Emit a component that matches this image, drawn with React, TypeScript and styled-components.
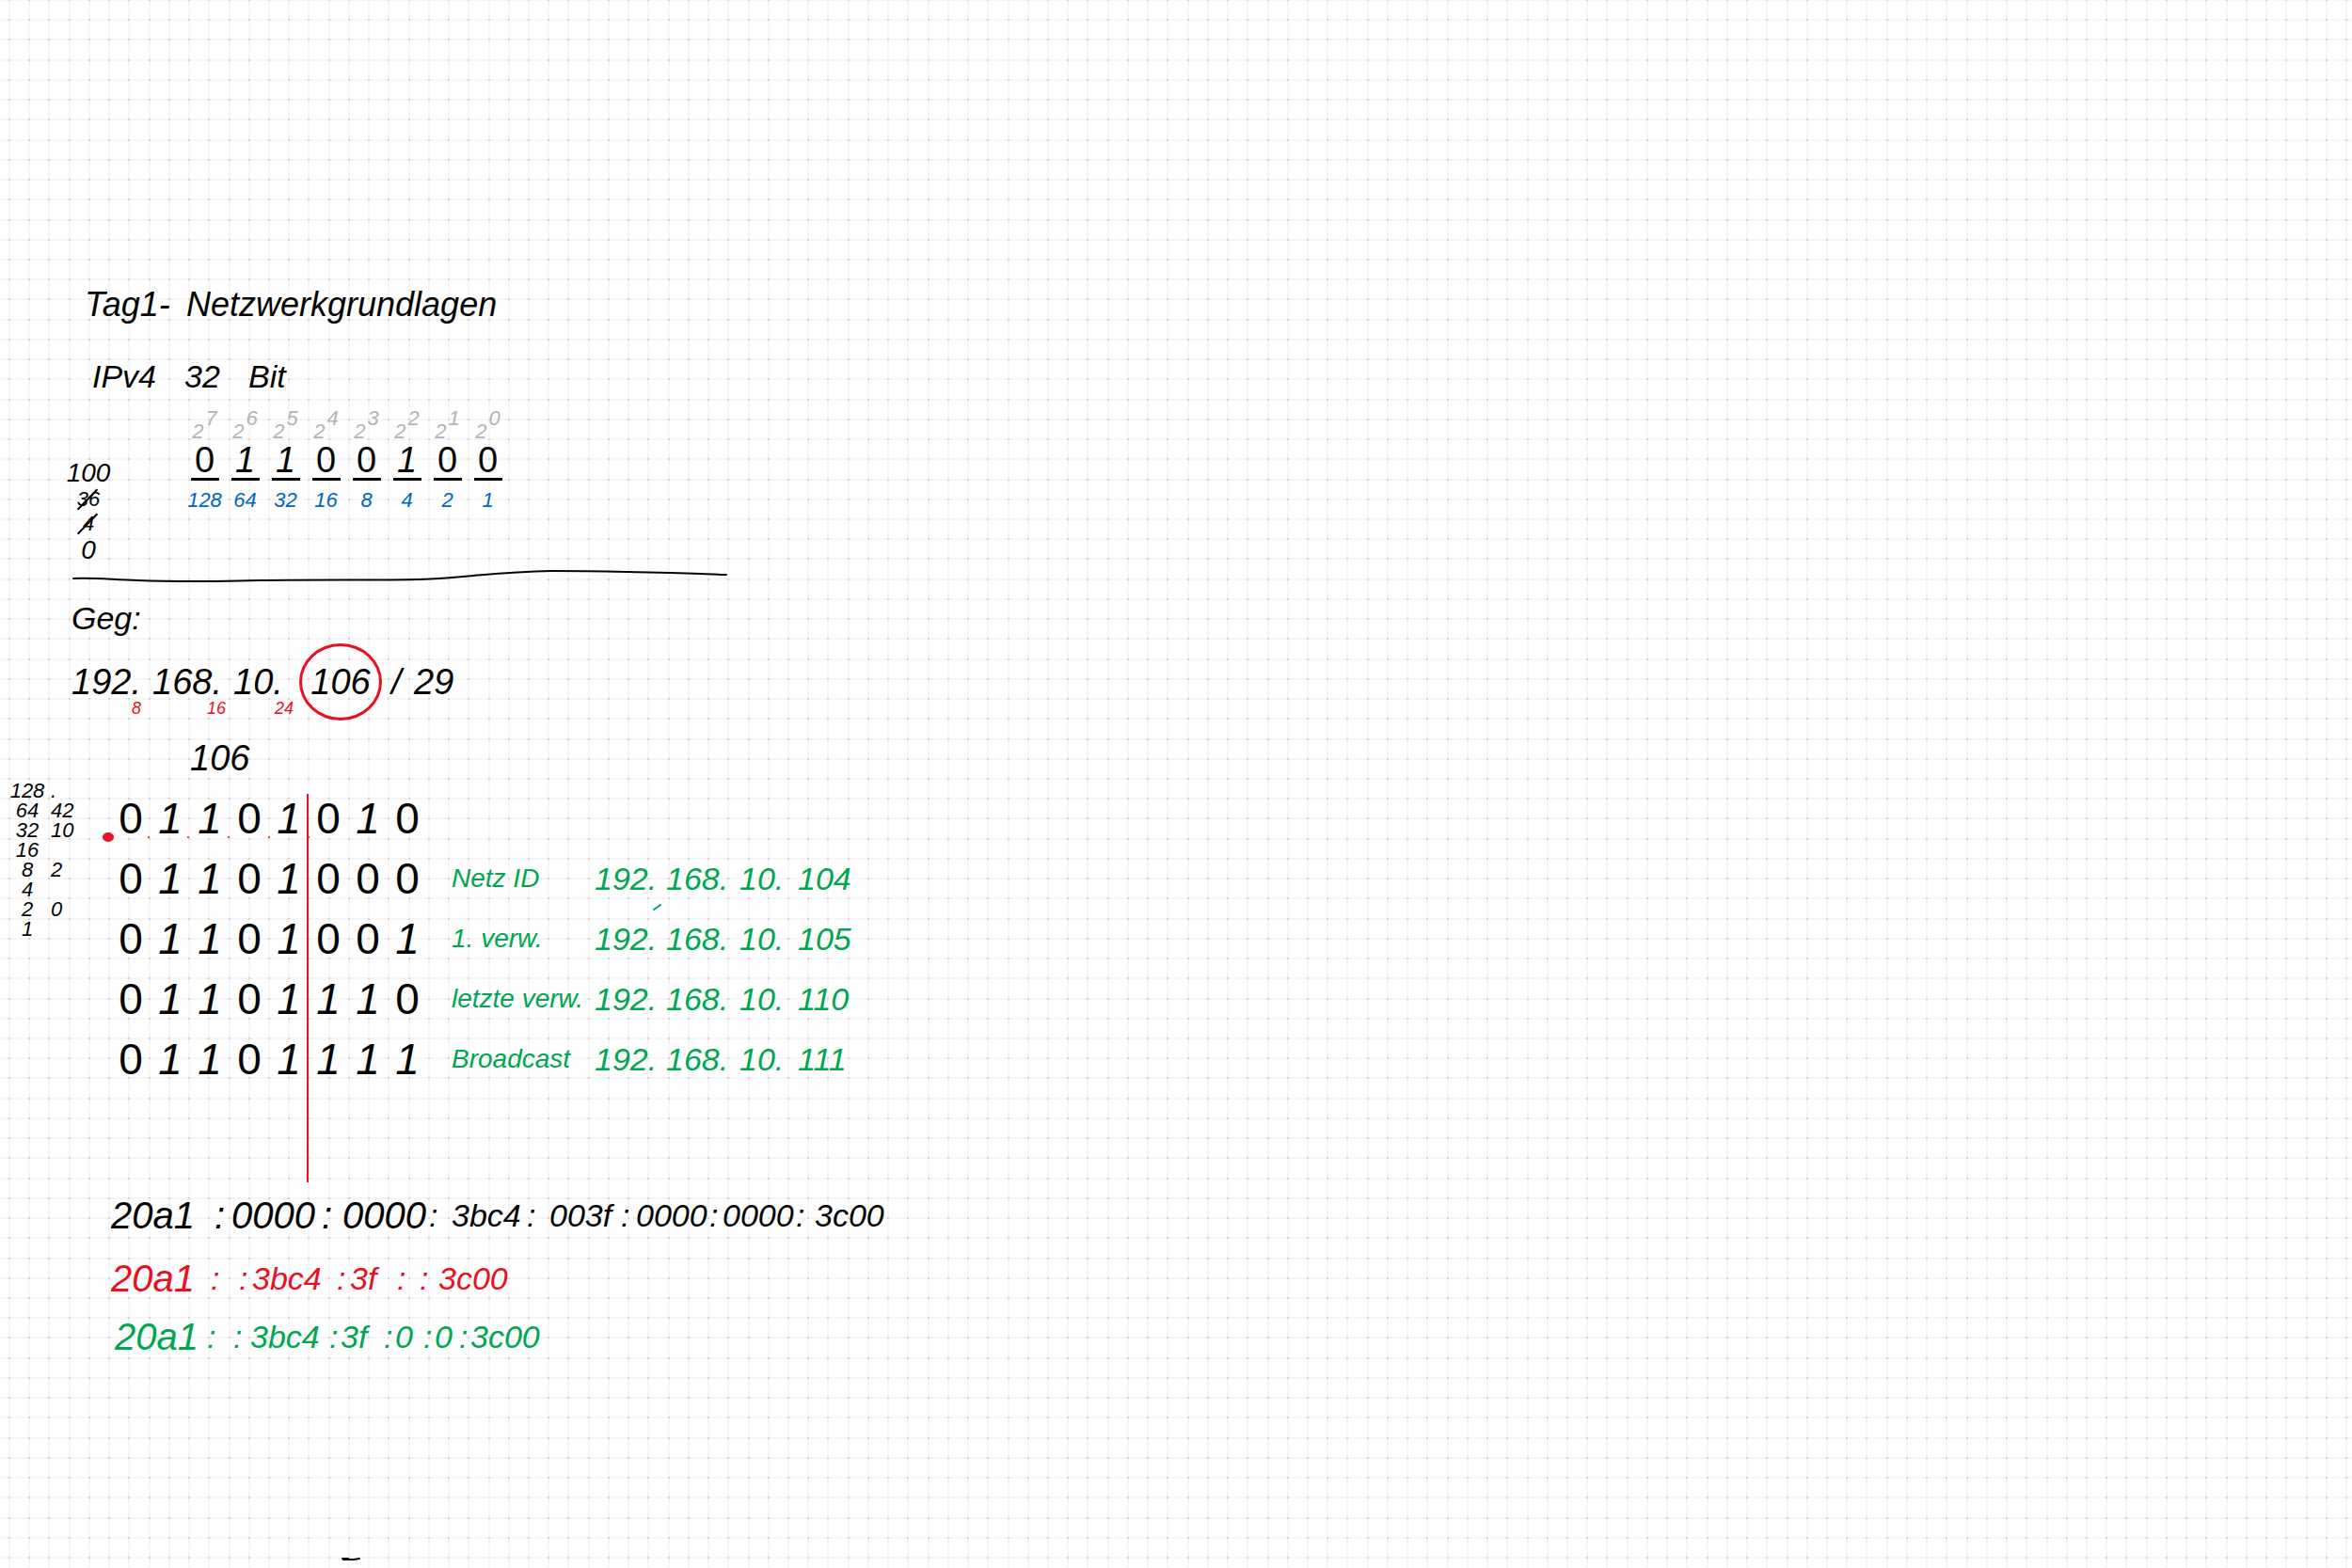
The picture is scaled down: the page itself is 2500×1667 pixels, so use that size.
import React from "react";
import styled, { createGlobalStyle } from "styled-components";

const ink = { black: "#050505", red: "#e81123", green: "#00a651", blue: "#0067c0", grey: "#b4b4b4" };
type Ink = keyof typeof ink;

const GlobalStyle = createGlobalStyle`
  html, body, #root { min-height: 100%; }
  body {
    margin: 0;
    background: #fefefe;
    overflow: hidden;
  }
`;

const Sheet = styled.main`
  position: relative;
  box-sizing: border-box;
  width: 100%;
  min-height: 100vh;
  padding-top: 288px;
  overflow: hidden;
  color: ${ink.black};
  font-family: "Liberation Sans", Arial, sans-serif;
  font-style: italic;
  font-size: 34px;
  line-height: 64px;
`;

const Paper = styled.svg`
  position: absolute;
  inset: 0;
  width: 100%;
  height: 100%;
`;

const Notes = styled.div`
  position: relative;
`;

const Line = styled.p<{ $tracks: string; $left: number; $ink?: Ink; $height?: number }>`
  display: grid;
  grid-template-columns: ${(p) => p.$tracks};
  margin: 0;
  padding-left: ${(p) => p.$left}px;
  height: ${(p) => p.$height ?? 64}px;
  line-height: ${(p) => p.$height ?? 64}px;
  color: ${(p) => ink[p.$ink ?? "black"]};
  white-space: nowrap;
`;

const Title = styled(Line)`
  font-size: 36px;
  font-weight: 400;
`;

const Given = styled(Line)`
  line-height: 70px;
`;

const AddressLine = styled(Line)`
  font-size: 38px;
`;

const CarriedOctet = styled(Line)`
  font-size: 38px;
  line-height: 80px;
`;

const Group = styled.span<{ $wide: boolean }>`
  font-size: ${(p) => (p.$wide ? 40 : 34)}px;
`;

const Conversion = styled.section`
  display: flex;
  height: 166px;
`;

const Remainders = styled.ol`
  display: flex;
  flex-direction: column;
  box-sizing: border-box;
  width: 196px;
  margin: 0;
  padding: 48px 0 0 70px;
  list-style: none;
`;

const Remainder = styled.li<{ $small?: boolean; $struck?: boolean }>`
  position: relative;
  width: 48px;
  font-size: ${(p) => (p.$small ? 22 : 28)}px;
  line-height: ${(p) => (p.$small ? 26 : 30)}px;
  text-align: center;
  &::after {
    content: ${(p) => (p.$struck ? '""' : "none")};
    position: absolute;
    left: 8px;
    top: 12px;
    width: 30px;
    height: 2px;
    background: currentColor;
    transform: rotate(-46deg);
  }
`;

const Places = styled.div`
  display: grid;
  grid-template-columns: repeat(8, 43px);
  align-content: start;
`;

const Place = styled.div`
  display: flex;
  flex-direction: column;
  align-items: center;
`;

const Power = styled.span`
  height: 30px;
  color: ${ink.grey};
  font-size: 22px;
  line-height: 38px;
  sup {
    margin-left: 2px;
    font-size: 22px;
    line-height: 0;
    vertical-align: 14px;
  }
`;

const Digit = styled.span<{ $slanted: boolean }>`
  width: 30px;
  height: 38px;
  border-bottom: 3px solid ${ink.black};
  font-style: ${(p) => (p.$slanted ? "italic" : "normal")};
  font-size: 38px;
  line-height: 38px;
  text-align: center;
`;

const Weight = styled.span`
  color: ${ink.blue};
  font-size: 22px;
  line-height: 42px;
`;

const Divider = styled.svg`
  display: block;
  width: 700px;
  height: 16px;
  margin-left: 76px;
`;

const Octet = styled.span`
  position: relative;
`;

const PrefixMark = styled.small<{ $left: number }>`
  position: absolute;
  left: ${(p) => p.$left}px;
  top: 60px;
  color: ${ink.red};
  font-size: 18px;
  line-height: 18px;
`;

const Circled = styled.span`
  display: flex;
  box-sizing: border-box;
  align-items: center;
  justify-content: center;
  width: 88px;
  height: 82px;
  border: 3px solid ${ink.red};
  border-radius: 50%;
`;

const Subnets = styled.section`
  position: relative;
  display: flex;
  height: 428px;
`;

const Sums = styled.div`
  display: grid;
  grid-template-columns: 38px 28px;
  grid-auto-rows: 21px;
  box-sizing: border-box;
  column-gap: 6px;
  width: 118px;
  padding-left: 10px;
  font-size: 22px;
  line-height: 21px;
`;

const Sum = styled.span<{ $right?: boolean }>`
  text-align: ${(p) => (p.$right ? "left" : "center")};
`;

const Table = styled.table`
  position: relative;
  align-self: flex-start;
  margin-top: 8px;
  border-collapse: collapse;
  table-layout: fixed;
  width: 802px;
`;

const Row = styled.tr`
  height: 64px;
`;

const Bit = styled.td<{ $slanted: boolean }>`
  width: 42px;
  padding: 0;
  font-size: 46px;
  font-style: ${(p) => (p.$slanted ? "italic" : "normal")};
  line-height: 64px;
  text-align: center;
`;

const Label = styled.th`
  width: 152px;
  padding: 0 0 0 26px;
  color: ${ink.green};
  font-size: 28px;
  font-weight: 400;
  text-align: left;
  white-space: nowrap;
`;

const Part = styled.td<{ $width: number }>`
  width: ${(p) => p.$width}px;
  padding: 0;
  color: ${ink.green};
`;

const SplitMarks = styled.svg`
  position: absolute;
  left: 104px;
  top: 14px;
  width: 620px;
  height: 416px;
`;

const BottomMark = styled.svg`
  position: absolute;
  left: 362px;
  bottom: 6px;
  width: 22px;
  height: 6px;
`;

/* 13 squares fill 276 pixels, so the ruling is drawn as a tile of that size. */
const TILE = 276;
const stops = Array.from({ length: 13 }, (_, i) => Math.round((i * TILE) / 13));

function SquaredPaper() {
  return (
    <Paper aria-hidden="true">
      <defs>
        <pattern id="squares" x="9" y="-1" width={TILE} height={TILE} patternUnits="userSpaceOnUse">
          {stops.map((s) => (
            <React.Fragment key={s}>
              <rect x={s} y="0" width="2" height={TILE} fill="#f6f6f6" />
              <rect x="0" y={s} width={TILE} height="2" fill="#f6f6f6" />
            </React.Fragment>
          ))}
          {stops.map((x) =>
            stops.map((y) => <rect key={`${x}-${y}`} x={x} y={y} width="2" height="2" fill="#d6d6d6" />)
          )}
        </pattern>
      </defs>
      <rect width="100%" height="100%" fill="url(#squares)" />
    </Paper>
  );
}

const places = [
  { bit: "0", exp: "7", weight: "128" },
  { bit: "1", exp: "6", weight: "64" },
  { bit: "1", exp: "5", weight: "32" },
  { bit: "0", exp: "4", weight: "16" },
  { bit: "0", exp: "3", weight: "8" },
  { bit: "1", exp: "2", weight: "4" },
  { bit: "0", exp: "1", weight: "2" },
  { bit: "0", exp: "0", weight: "1" },
];

const sums: [string, string][] = [
  ["128", "."],
  ["64", "42"],
  ["32", "10"],
  ["16", ""],
  ["8", "2"],
  ["4", ""],
  ["2", "0"],
  ["1", ""],
];

const subnets = [
  { bits: "01101010", label: "", parts: ["", "", "", ""] },
  { bits: "01101000", label: "Netz ID", parts: ["192.", "168.", "10.", "104"] },
  { bits: "01101001", label: "1. verw.", parts: ["192.", "168.", "10.", "105"] },
  { bits: "01101110", label: "letzte verw.", parts: ["192.", "168.", "10.", "110"] },
  { bits: "01101111", label: "Broadcast", parts: ["192.", "168.", "10.", "111"] },
];
const partWidths = [76, 78, 62, 72];

/* The first groups of each address are written larger; `wide` counts them in tokens. */
const addresses: {
  ink: Ink;
  left: number;
  height: number;
  wide: number;
  tracks: number[];
  tokens: string[];
}[] = [
  {
    ink: "black",
    left: 118,
    height: 68,
    wide: 5,
    tracks: [110, 18, 96, 22, 92, 24, 80, 24, 76, 16, 78, 14, 78, 20, 90],
    tokens: ["20a1", ":", "0000", ":", "0000", ":", "3bc4", ":", "003f", ":", "0000", ":", "0000", ":", "3c00"],
  },
  {
    ink: "red",
    left: 118,
    height: 66,
    wide: 1,
    tracks: [106, 30, 14, 90, 14, 50, 24, 20, 90],
    tokens: ["20a1", ":", ":", "3bc4", ":", "3f", ":", ":", "3c00"],
  },
  {
    ink: "green",
    left: 122,
    height: 58,
    wide: 1,
    tracks: [98, 28, 18, 84, 12, 46, 12, 30, 12, 26, 12, 90],
    tokens: ["20a1", ":", ":", "3bc4", ":", "3f", ":", "0", ":", "0", ":", "3c00"],
  },
];

export default function App() {
  return (
    <Sheet>
      <GlobalStyle />
      <SquaredPaper />
      <Notes>
        <Title as="h1" $left={90} $tracks="108px auto" $height={72}>
          <span>Tag1-</span>
          <span>Netzwerkgrundlagen</span>
        </Title>
        <Line $left={98} $tracks="98px 68px auto" $height={80}>
          <span>IPv4</span>
          <span>32</span>
          <span>Bit</span>
        </Line>

        <Conversion>
          <Remainders>
            <Remainder>100</Remainder>
            <Remainder $small $struck>
              36
            </Remainder>
            <Remainder $small $struck>
              4
            </Remainder>
            <Remainder>0</Remainder>
          </Remainders>
          <Places>
            {places.map((p) => (
              <Place key={p.exp}>
                <Power>
                  2<sup>{p.exp}</sup>
                </Power>
                <Digit $slanted={p.bit === "1"}>{p.bit}</Digit>
                <Weight>{p.weight}</Weight>
              </Place>
            ))}
          </Places>
        </Conversion>

        <Divider viewBox="0 0 700 16" aria-hidden="true">
          <path
            d="M2 9 C24 8 40 10 70 11 C120 13 160 12 200 11 C260 10 330 11 370 10 C420 8 450 2 510 1 C560 1 640 3 696 5"
            fill="none"
            stroke={ink.black}
            strokeWidth="2"
            strokeLinecap="round"
          />
        </Divider>

        <Given $left={76} $tracks="auto" $height={62}>
          <span>Geg:</span>
        </Given>
        <AddressLine $left={76} $tracks="86px 86px 70px 98px 24px auto" $height={82}>
          <Octet>
            192.<PrefixMark $left={64}>8</PrefixMark>
          </Octet>
          <Octet>
            168.<PrefixMark $left={58}>16</PrefixMark>
          </Octet>
          <Octet>
            10.<PrefixMark $left={44}>24</PrefixMark>
          </Octet>
          <Circled>106</Circled>
          <span>/</span>
          <span>29</span>
        </AddressLine>
        <CarriedOctet $left={202} $tracks="auto">
          <span>106</span>
        </CarriedOctet>

        <Subnets>
          <Sums>
            {sums.map(([left, right], i) => (
              <React.Fragment key={i}>
                <Sum>{left}</Sum>
                <Sum $right>{right}</Sum>
              </React.Fragment>
            ))}
          </Sums>
          <Table>
            <tbody>
              {subnets.map((row) => (
                <Row key={row.bits}>
                  {row.bits.split("").map((b, i) => (
                    <Bit key={i} $slanted={b === "1"}>
                      {b}
                    </Bit>
                  ))}
                  <Label scope="row">{row.label}</Label>
                  {row.parts.map((part, i) => (
                    <Part key={i} $width={partWidths[i]}>
                      {part}
                    </Part>
                  ))}
                </Row>
              ))}
            </tbody>
          </Table>
          <SplitMarks viewBox="0 0 620 416" aria-hidden="true">
            <path d="M223 0V413" stroke={ink.red} strokeWidth="2" />
            <ellipse cx="11" cy="46" rx="6" ry="5" fill={ink.red} />
            {[54, 96, 139, 182, 224].map((x) => (
              <circle key={x} cx={x} cy="46" r="1" fill={ink.red} />
            ))}
            <path d="M591 123 L598 118" stroke={ink.green} strokeWidth="2" strokeLinecap="round" />
          </SplitMarks>
        </Subnets>

        {addresses.map((a) => (
          <Line
            key={a.ink}
            $ink={a.ink}
            $left={a.left}
            $height={a.height}
            $tracks={a.tracks.map((t) => `${t}px`).join(" ")}
          >
            {a.tokens.map((t, i) => (
              <Group key={i} $wide={i < a.wide}>
                {t}
              </Group>
            ))}
          </Line>
        ))}
      </Notes>
      <BottomMark viewBox="0 0 22 6" aria-hidden="true">
        <path d="M2 2 H8 M3 3 H14 L20 2" fill="none" stroke={ink.black} strokeWidth="2" strokeLinecap="round" />
      </BottomMark>
    </Sheet>
  );
}
